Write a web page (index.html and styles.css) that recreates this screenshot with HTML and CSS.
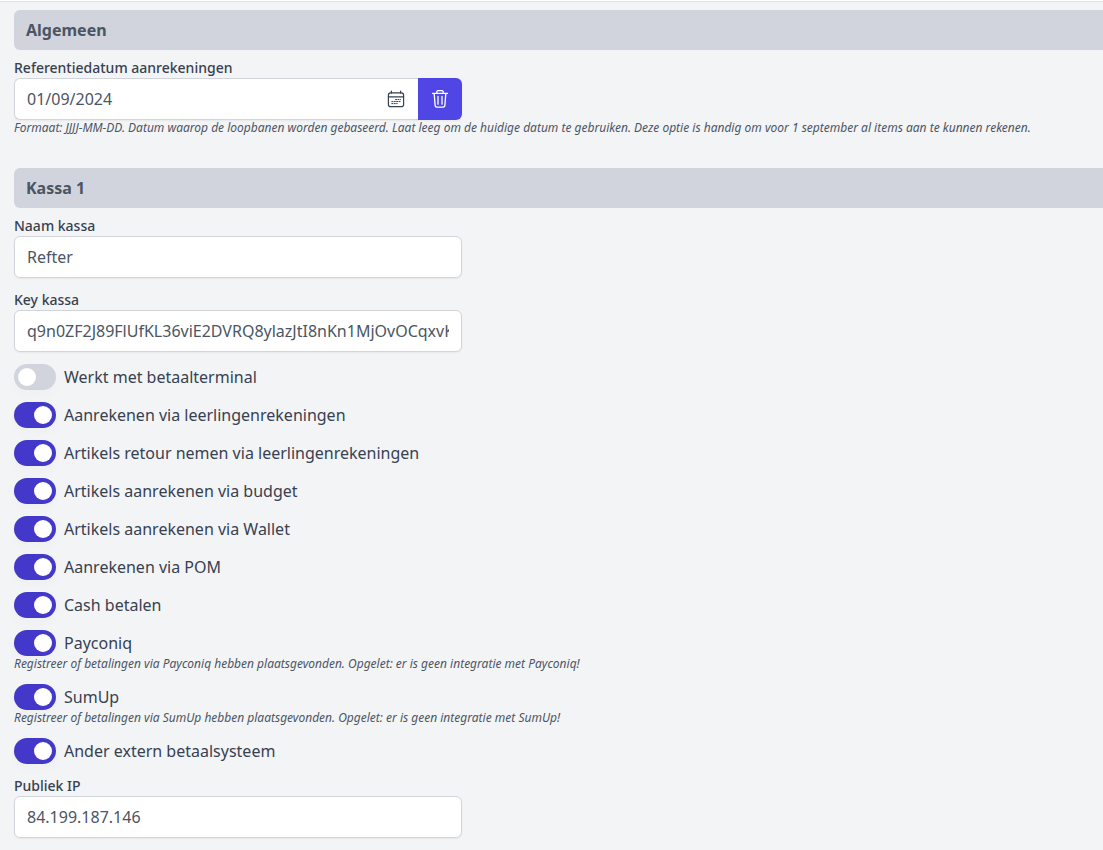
FILE: index.html
```html
<!DOCTYPE html>
<html lang="nl">
<head>
<meta charset="utf-8">
<meta name="viewport" content="width=device-width, initial-scale=1">
<title>Instellingen kassa</title>
<link rel="stylesheet" href="styles.css">
</head>
<body>
<form class="settings">
  <section class="section">
    <h2 class="section-title">Algemeen</h2>
    <div class="fields">
      <div class="field">
        <label class="field-label" for="refdate">Referentiedatum aanrekeningen</label>
        <div class="input-group">
          <div class="date-box">
            <input class="date-input" id="refdate" type="text" value="01/09/2024">
            <svg class="icon" viewBox="0 0 20 20" fill="none" stroke="#374151" stroke-width="1.2" stroke-linecap="round" aria-hidden="true">
              <rect x="2.4" y="3.9" width="15.2" height="13.7" rx="2.2"/>
              <path d="M5.4 2v2M14.6 2v2M2.4 7.8h15.2"/>
              <path d="M9.5 10.6h5M5.8 12.6h8.7M5.8 14.6h5.4" stroke-width="1" stroke-dasharray="1.1 1.3"/>
            </svg>
          </div>
          <button class="clear-button" type="button" aria-label="Datum wissen">
            <svg class="icon" viewBox="0 0 20 20" fill="none" stroke="#fff" stroke-width="1.3" stroke-linecap="round" stroke-linejoin="round" aria-hidden="true">
              <path d="M2.6 4.4h14.8M6.8 4.2V2.8a1.2 1.2 0 0 1 1.2-1.2h4a1.2 1.2 0 0 1 1.2 1.2v1.4M4.2 4.6l.9 11.8a1.8 1.8 0 0 0 1.8 1.7h6.2a1.8 1.8 0 0 0 1.8-1.7l.9-11.8M8 7.4v7.8M12 7.4v7.8"/>
            </svg>
          </button>
        </div>
        <p class="hint">Formaat: JJJJ-MM-DD. Datum waarop de loopbanen worden gebaseerd. Laat leeg om de huidige datum te gebruiken. Deze optie is handig om voor 1 september al items aan te kunnen rekenen.</p>
      </div>
    </div>
  </section>

  <section class="section">
    <h2 class="section-title">Kassa 1</h2>
    <div class="fields">
      <div class="field">
        <label class="field-label" for="name">Naam kassa</label>
        <input class="text-input" id="name" type="text" value="Refter">
      </div>
      <div class="field">
        <label class="field-label" for="key">Key kassa</label>
        <input class="text-input" id="key" type="text" spellcheck="false" value="q9n0ZF2J89FlUfKL36viE2DVRQ8ylazJtI8nKn1MjOvOCqxvK">
      </div>
      <div class="field"><label class="toggle"><input class="switch" type="checkbox" role="switch">Werkt met betaalterminal</label></div>
      <div class="field"><label class="toggle"><input class="switch" type="checkbox" role="switch" checked>Aanrekenen via leerlingenrekeningen</label></div>
      <div class="field"><label class="toggle"><input class="switch" type="checkbox" role="switch" checked>Artikels retour nemen via leerlingenrekeningen</label></div>
      <div class="field"><label class="toggle"><input class="switch" type="checkbox" role="switch" checked>Artikels aanrekenen via budget</label></div>
      <div class="field"><label class="toggle"><input class="switch" type="checkbox" role="switch" checked>Artikels aanrekenen via Wallet</label></div>
      <div class="field"><label class="toggle"><input class="switch" type="checkbox" role="switch" checked>Aanrekenen via POM</label></div>
      <div class="field"><label class="toggle"><input class="switch" type="checkbox" role="switch" checked>Cash betalen</label></div>
      <div class="field">
        <label class="toggle"><input class="switch" type="checkbox" role="switch" checked>Payconiq</label>
        <p class="hint">Registreer of betalingen via Payconiq hebben plaatsgevonden. Opgelet: er is geen integratie met Payconiq!</p>
      </div>
      <div class="field">
        <label class="toggle"><input class="switch" type="checkbox" role="switch" checked>SumUp</label>
        <p class="hint">Registreer of betalingen via SumUp hebben plaatsgevonden. Opgelet: er is geen integratie met SumUp!</p>
      </div>
      <div class="field"><label class="toggle"><input class="switch" type="checkbox" role="switch" checked>Ander extern betaalsysteem</label></div>
      <div class="field">
        <label class="field-label" for="ip">Publiek IP</label>
        <input class="text-input" id="ip" type="text" value="84.199.187.146">
      </div>
    </div>
  </section>
</form>
</body>
</html>
```
FILE: styles.css
```css
*, *::before, *::after { box-sizing: border-box; }

body {
  margin: 0;
  border-top: 1px solid #fff;
  background: #f3f4f6;
  color: #374151;
  font-family: "Noto Sans", sans-serif;
  font-size: 16px;
  line-height: 24px;
}

.settings {
  display: flex;
  flex-direction: column;
  gap: 32px;
  padding: 8px 0 12px 14px;
  border-top: 1px solid #dfe3e3;
}

.section {
  display: flex;
  flex-direction: column;
  gap: 8px;
}

.section-title {
  margin: 0;
  padding: 8px 12px;
  border-radius: 6px 0 0 6px;
  background: #d1d4dc;
  color: #4b5563;
  font-size: 16px;
  font-weight: 700;
}

.fields {
  display: flex;
  flex-direction: column;
  gap: 12px;
}

.field {
  display: flex;
  flex-direction: column;
  align-items: flex-start;
}

.field-label {
  font-size: 14px;
  font-weight: 500;
  line-height: 20px;
}

.text-input,
.input-group {
  width: 100%;
  max-width: 448px;
  height: 42px;
  border-radius: 6px;
  box-shadow: 0 1px 2px rgb(0 0 0 / 5%);
}

.text-input,
.date-box {
  padding: 8px 12px;
  border: 1px solid #d1d5db;
  background: #fff;
}

.text-input,
.date-input {
  color: #4b5563;
  font: inherit;
}

.input-group { display: flex; }

.date-box {
  display: flex;
  flex: 1;
  align-items: center;
  border-right: 0;
  border-radius: 6px 0 0 6px;
}

.date-input {
  flex: 1;
  min-width: 0;
  padding: 0;
  border: 0;
  background: none;
}

.clear-button {
  display: flex;
  align-items: center;
  padding: 0 12px;
  border: 0;
  border-radius: 0 6px 6px 0;
  background: #4f46e5;
  cursor: pointer;
}

.icon {
  width: 20px;
  height: 20px;
}

.hint {
  margin: 0;
  color: #4b5563;
  font-size: 12px;
  font-style: italic;
  line-height: 16px;
}

.toggle {
  display: flex;
  align-items: center;
  gap: 8px;
  height: 26px;
}

.switch {
  display: flex;
  flex: none;
  width: 42px;
  height: 26px;
  margin: 0;
  padding: 4px;
  border-radius: 13px;
  background: #d1d4dc;
  box-shadow: 0 6px 12px rgb(0 0 0 / 2%);
  appearance: none;
  cursor: pointer;
}

.switch::before {
  width: 18px;
  height: 18px;
  border-radius: 50%;
  background: #fff;
  content: "";
}

.switch:checked {
  justify-content: flex-end;
  background: #4338ca;
}
```
